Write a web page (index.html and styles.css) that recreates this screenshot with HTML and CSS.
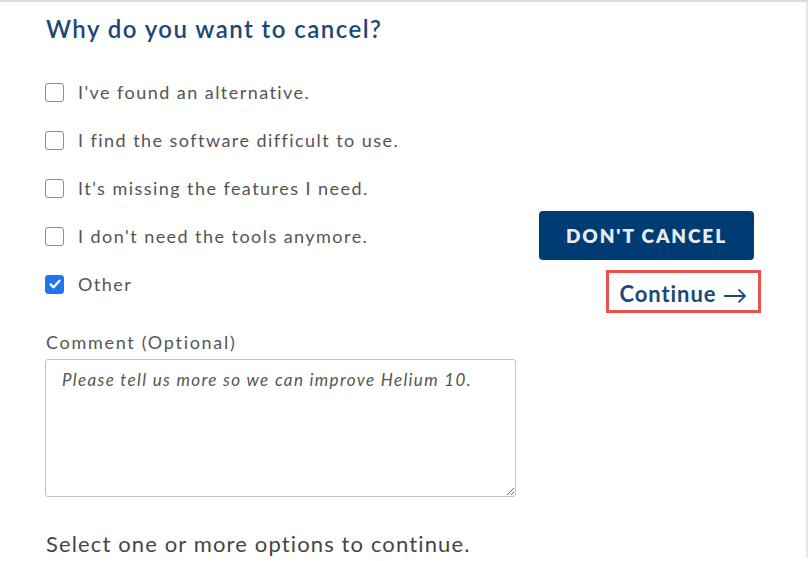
FILE: index.html
```html
<!DOCTYPE html>
<html lang="en">
<head>
<meta charset="utf-8">
<title>Why do you want to cancel?</title>
<link rel="stylesheet" href="styles.css">
</head>
<body>
<div class="panel">
  <div class="layout">
    <form class="form">
      <h1 class="title">Why do you want to cancel?</h1>
      <ul class="options">
        <li class="option"><label><input type="checkbox" class="check"><span>I've found an alternative.</span></label></li>
        <li class="option"><label><input type="checkbox" class="check"><span>I find the software difficult to use.</span></label></li>
        <li class="option"><label><input type="checkbox" class="check"><span>It's missing the features I need.</span></label></li>
        <li class="option"><label><input type="checkbox" class="check"><span>I don't need the tools anymore.</span></label></li>
        <li class="option"><label><input type="checkbox" class="check" checked><span>Other</span></label></li>
      </ul>
      <label class="comment-label" for="comment">Comment (Optional)</label>
      <textarea id="comment" class="comment" placeholder="Please tell us more so we can improve Helium 10."></textarea>
      <p class="hint">Select one or more options to continue.</p>
    </form>
    <div class="actions">
      <button type="button" class="btn-primary">DON'T CANCEL</button>
      <a class="continue" href="#"><span>Continue</span><span class="arrow">&#x2192;</span></a>
    </div>
  </div>
</div>
</body>
</html>
```

FILE: styles.css
```css
html, body {
  margin: 0;
  padding: 0;
  background: #ffffff;
}

body {
  font-family: "Lato", "Open Sans", sans-serif;
  color: #555555;
}

.panel {
  width: 808px;
  height: 558px;
  border-top: 2px solid #dcdcdc;
  border-right: 2px solid #e6e6e6;
  box-sizing: border-box;
  overflow: hidden;
  box-shadow: 0 3px 3px -2px #eeeeee;
}

.layout {
  display: flex;
  padding-left: 45px;
}

.form {
  width: 471px;
  display: flex;
  flex-direction: column;
}

.title {
  margin: 12px 0 0;
  padding-left: 1px;
  font-size: 24px;
  line-height: 30px;
  font-weight: 600;
  color: #1b4877;
  letter-spacing: 1.45px;
  white-space: nowrap;
}

.options {
  list-style: none;
  margin: 24px 0 0;
  padding: 0;
}

.option {
  height: 48px;
  display: flex;
  align-items: center;
}

.option label {
  display: flex;
  align-items: center;
  gap: 14px;
  font-size: 18px;
  color: #555555;
  letter-spacing: 1.45px;
  white-space: nowrap;
  cursor: pointer;
}

.check {
  appearance: none;
  -webkit-appearance: none;
  margin: 0;
  width: 19px;
  height: 19px;
  border: 1.5px solid #8f8f8f;
  border-radius: 3px;
  background: #ffffff;
  box-sizing: border-box;
  flex: none;
}

.check:checked {
  border-color: #1f76ee;
  background: #1f76ee url("data:image/svg+xml;utf8,<svg xmlns='http://www.w3.org/2000/svg' viewBox='0 0 16 16'><path d='M3.6 8.4 6.6 11.3 12.5 4.7' fill='none' stroke='white' stroke-width='2.3' stroke-linecap='round' stroke-linejoin='round'/></svg>") center/16px 16px no-repeat;
}

.comment-label {
  margin-top: 22px;
  padding-left: 1px;
  font-size: 18px;
  line-height: 24px;
  color: #555555;
  letter-spacing: 1.7px;
  white-space: nowrap;
}

.comment {
  margin-top: 5px;
  width: 471px;
  height: 138px;
  box-sizing: border-box;
  border: 1px solid #c4c4c4;
  border-radius: 3px;
  padding: 10px 16px;
  font-family: inherit;
  font-size: 17px;
  line-height: 20px;
  letter-spacing: 1.35px;
  color: #555555;
  resize: vertical;
}

.comment::placeholder {
  font-style: italic;
  color: #555555;
  opacity: 1;
}

.hint {
  margin: 34px 0 0;
  padding-left: 1px;
  font-size: 22px;
  line-height: 26px;
  color: #454545;
  letter-spacing: 1.13px;
  white-space: nowrap;
}

.actions {
  margin-left: 23px;
  padding-top: 209px;
  display: flex;
  flex-direction: column;
  align-items: flex-end;
  width: 215px;
}

.btn-primary {
  width: 215px;
  height: 49px;
  border: none;
  border-radius: 4px;
  background: #003b73;
  color: #e9ecef;
  font-family: inherit;
  font-size: 19px;
  font-weight: 800;
  letter-spacing: 1.9px;
  cursor: pointer;
}

.continue {
  margin-top: 10px;
  margin-right: -7px;
  width: 155px;
  height: 43px;
  box-sizing: border-box;
  border: 3px solid #ec524b;
  padding-top: 4px;
  display: flex;
  align-items: center;
  justify-content: center;
  font-size: 22px;
  font-weight: 700;
  color: #1b4877;
  text-decoration: none;
  letter-spacing: 0.9px;
  white-space: nowrap;
}

.arrow {
  margin-left: 6px;
  font-weight: 400;
  font-size: 25px;
  letter-spacing: 0;
}
```
